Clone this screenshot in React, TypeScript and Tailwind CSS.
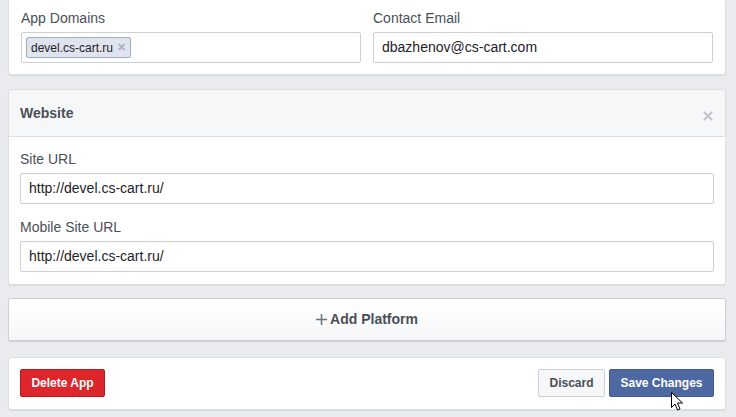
import React from "react";

const font = { fontFamily: '"Liberation Sans", Arial, Helvetica, sans-serif' };

function Label({ children }: { children: React.ReactNode }) {
  return <div className="text-[14px] leading-[18px] text-[#4b4f56]">{children}</div>;
}

function TextInput({ value }: { value: string }) {
  return (
    <div className="mt-[5px] h-[31px] border border-[#ccd0d5] rounded-[2px] bg-white flex items-center pl-[8px] text-[14px] text-[#1d2129]">
      {value}
    </div>
  );
}

export default function App() {
  return (
    <div style={font} className="relative w-[736px] h-[417px] bg-[#e9ebee] overflow-hidden pl-[8px] pr-[10px]">
      {/* Top card */}
      <div className="bg-white border-x border-b border-[#dddfe2] rounded-b-[3px] shadow-[0_1px_1px_rgba(0,0,0,0.08)] px-[12px] pt-[9px] pb-[11px] flex gap-[12px]">
        <div className="flex-1">
          <Label>App Domains</Label>
          <div className="mt-[5px] h-[31px] border border-[#ccd0d5] rounded-[2px] bg-white flex items-center pl-[4px]">
            <div className="h-[21px] flex items-center gap-[4px] px-[4px] bg-[#dfe4ee] border border-[#9eabc4] rounded-[2px] text-[12px] text-[#1d2129]">
              <span>devel.cs-cart.ru</span>
              <span className="text-[#aab1bf] text-[11px] font-bold leading-none">✕</span>
            </div>
          </div>
        </div>
        <div className="flex-1">
          <Label>Contact Email</Label>
          <TextInput value="dbazhenov@cs-cart.com" />
        </div>
      </div>

      {/* Website card */}
      <div className="mt-[14px] bg-white border border-[#dddfe2] rounded-[3px] shadow-[0_1px_1px_rgba(0,0,0,0.08)]">
        <div className="h-[47px] bg-[#f6f7f9] border-b border-[#dddfe2] rounded-t-[3px] flex items-center justify-between pl-[11px] pr-[12px]">
          <span className="text-[14px] font-bold text-[#4b4f56]">Website</span>
          <svg width="10" height="10" viewBox="0 0 10 10" className="mt-[6px]">
            <path d="M1 1 L9 9 M9 1 L1 9" stroke="#bec2c9" strokeWidth="2" />
          </svg>
        </div>
        <div className="px-[11px] pt-[13px] pb-[12px]">
          <Label>Site URL</Label>
          <TextInput value="http://devel.cs-cart.ru/" />
          <div className="mt-[14px]">
            <Label>Mobile Site URL</Label>
          </div>
          <TextInput value="http://devel.cs-cart.ru/" />
        </div>
      </div>

      {/* Add Platform */}
      <div className="mt-[13px] h-[43px] border border-[#ccd0d5] rounded-[2px] bg-gradient-to-b from-white to-[#f6f7f9] shadow-[0_1px_1px_rgba(0,0,0,0.1)] flex items-center justify-center gap-[3px]">
        <svg width="11" height="11" viewBox="0 0 11 11">
          <path d="M5.5 0 V11 M0 5.5 H11" stroke="#6e737b" strokeWidth="1.5" />
        </svg>
        <span className="text-[14px] font-bold text-[#4b4f56]">Add Platform</span>
      </div>

      {/* Bottom card */}
      <div className="mt-[16px] bg-white border border-[#dddfe2] rounded-[3px] shadow-[0_1px_1px_rgba(0,0,0,0.08)] px-[11px] pt-[11px] pb-[12px] flex items-center">
        <button className="h-[28px] w-[85px] rounded-[2px] bg-[#dc262c] border border-[#b41b20] text-white text-[12px] font-bold">
          Delete App
        </button>
        <div className="flex-1" />
        <button className="h-[28px] w-[67px] rounded-[2px] bg-[#f6f7f9] border border-[#ced0d4] text-[#4b4f56] text-[12px] font-bold">
          Discard
        </button>
        <button className="ml-[4px] h-[28px] w-[105px] rounded-[2px] bg-[#4e69a2] border border-[#435a8b] text-white text-[12px] font-bold">
          Save Changes
        </button>
      </div>

      {/* Mouse cursor */}
      <svg className="absolute left-[671px] top-[392px]" width="14" height="20" viewBox="0 0 14 20">
        <path d="M0.5 0.5 L0.5 15.5 L4 12 L6.5 18 L9 17 L6.5 11 L11.5 11 Z" fill="white" stroke="black" strokeWidth="1" strokeLinejoin="miter" />
      </svg>
    </div>
  );
}
